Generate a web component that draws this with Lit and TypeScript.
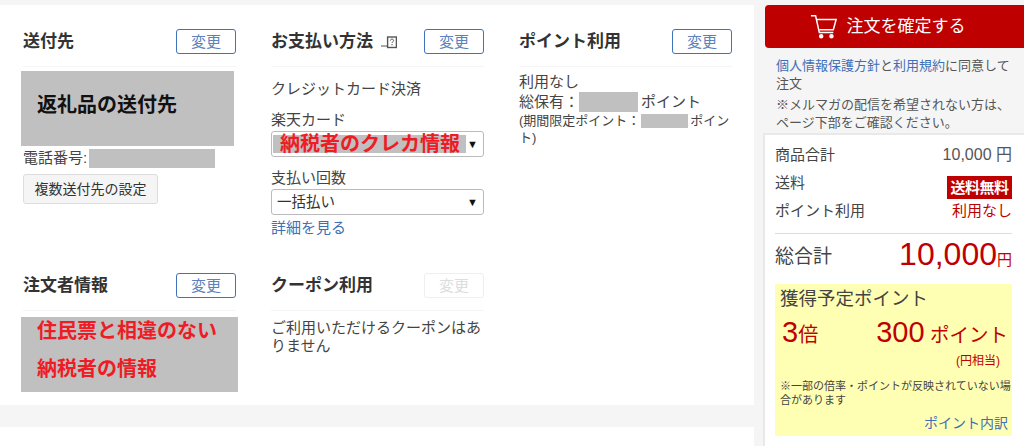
import { LitElement, html, css } from "lit";
import { customElement } from "lit/decorators.js";

@customElement("app-root")
export class AppRoot extends LitElement {
  static styles = css`
    :host { display: block; width: 1024px; height: 446px; overflow: hidden; background: #f5f5f5; color: #444;
      font-family: "Liberation Sans", "Noto Sans CJK JP", sans-serif; font-size: 15px; line-height: 20px; }
    * { box-sizing: border-box; }
    a { color: #3f6fb5; text-decoration: none; }
    .page { display: flex; align-items: flex-start; padding-top: 5px; height: 446px; }
    .left { width: 754px; flex: none; display: flex; flex-direction: column; gap: 22px; }
    .panel { background: #fff; height: 400px; padding: 24px 21px 0 23px; display: grid; grid-template-columns: repeat(3, 213px); column-gap: 35px; grid-template-rows: 244px auto; }
    .blank { background: #fff; height: 40px; }
    .head { display: flex; justify-content: space-between; align-items: flex-start; height: 38px; border-bottom: 1px solid #f5f5f5; }
    .title { font-size: 17px; font-weight: 700; color: #333; line-height: 24px; margin-top: 1px; display: flex; align-items: center; gap: 8px; }
    .chg { width: 60px; height: 25px; border: 1px solid #3f73b8; border-radius: 3px; color: #5a82bd; background: #fff; font-size: 15px; display: flex; align-items: center; justify-content: center; }
    .chg.off { border-color: #eee; color: #ddd; }
    .mask { background: #c0c0c0; }
    .addr { margin: 4px 0 0 -2px; width: 213px; height: 75px; padding: 22px 16px 0; font-size: 20px; font-weight: 700; color: #111; line-height: 24px; }
    .tel { display: flex; align-items: center; height: 20px; margin-top: 2px; }
    .tel .mask { width: 126px; height: 19px; margin-left: 2px; }
    .multi { margin-top: 6px; width: 135px; height: 30px; border: 1px solid #ddd; border-radius: 3px; background: #f5f5f5; color: #333; font-size: 14px; display: flex; align-items: center; justify-content: center; }
    .pay1 { margin-top: 12px; }
    .lbl { margin-top: 11px; line-height: 20px; }
    .sel { height: 26px; border: 1px solid #bbb; border-radius: 3px; background: #fff; display: flex; align-items: center; justify-content: space-between; padding: 0 5px; color: #333; margin-top: 1px; font-size: 14.5px; }
    .sel.c { padding-left: 1px; }
    .sel .mask { width: 193px; height: 18px; color: #ee1c25; font-size: 20px; font-weight: 700; padding-left: 7px; line-height: 18px; white-space: nowrap; }
    .arrow { font-size: 11px; color: #111; line-height: 1; }
    .g2 { margin-top: 11px; }
    .sel + a { display: block; margin-top: 3px; }
    .pts { margin-top: 5px; }
    .pts div { white-space: nowrap; display: flex; align-items: center; height: 20px; }
    .pts .m1 { width: 59px; height: 20px; margin-right: 3px; }
    .pts .m2 { width: 47px; height: 14px; margin: 0 2px 0 1px; }
    .pts .sm { font-size: 13px; height: 17px; }
    .who { display: flow-root; margin: 6px 0 0 -2px; width: 217px; height: 75px; padding: 0 16px; color: #ee1c25; font-size: 20px; font-weight: 700; line-height: 38px; }
    .who div { margin-top: -5px; }
    .cp { margin-top: 8px; line-height: 18px; }
    .right { width: 259px; margin-left: 11px; flex: none; }
    .buy { height: 43px; background: #bf0000; border-radius: 4px 0 0 4px; color: #fff; font-size: 17px; display: flex; align-items: center; justify-content: center; gap: 9px; padding-right: 14px; }
    .note { padding: 9px 10px 0 11px; font-size: 13px; line-height: 18px; color: #555; height: 85px; }
    .note p { margin: 0 0 3px; }
    .box { width: 262px; height: 320px; margin-left: -2px; background: #fff; border: 2px solid #e9e9e9; border-right: 0; padding: 6px 0 0 10px; }
    .row { display: flex; justify-content: space-between; align-items: center; width: 237px; height: 28px; color: #444; font-size: 15px; }
    .row .v { color: #555; font-size: 16px; }
    .free { background: #bf0000; color: #fff; font-weight: 700; font-size: 15px; height: 23px; width: 65px; line-height: 23px; text-align: center; white-space: nowrap; margin-top: 8px; letter-spacing: -0.5px; }
    .red { color: #bf0000; }
    .total { width: 237px; margin-top: 8px; border-top: 1px solid #ddd; height: 51px; padding-bottom: 4px; display: flex; justify-content: space-between; align-items: center; font-size: 19px; }
    .total .red { font-size: 32px; line-height: 40px; }
    .total small { font-size: 15px; }
    .yel { width: 237px; height: 152px; background: #ffffb3; padding: 3px 0 0 5px; }
    .yel .t { font-size: 18.5px; line-height: 24px; white-space: nowrap; }
    .big { display: flex; justify-content: space-between; align-items: baseline; color: #bf0000; font-size: 19.5px; line-height: 36px; margin-top: 3px; padding: 0 4px 0 2px; white-space: nowrap; }
    .big b { font-weight: 400; font-size: 29px; }
    .bai { font-size: 20px; }
    .en { text-align: right; color: #bf0000; font-size: 12px; line-height: 16px; padding-right: 12px; }
    .fine { font-size: 11px; line-height: 14px; margin-top: 10px; color: #444; }
    .more { text-align: right; font-size: 14px; margin-top: 6px; padding-right: 4px; }
  `;
  render() {
    const head = (t: unknown, off = false) => html`<div class="head"><div class="title">${t}</div><div class="chg ${off ? "off" : ""}">変更</div></div>`;
    return html`<div class="page">
      <div class="left">
        <div class="panel">
          <section>
            ${head("送付先")}
            <div class="mask addr">返礼品の送付先</div>
            <div class="tel">電話番号:<span class="mask"></span></div>
            <div class="multi">複数送付先の設定</div>
          </section>
          <section>
            ${head(html`お支払い方法
              <svg width="16" height="13" viewBox="0 0 16 13"><path d="M0 10h6" stroke="#555" fill="none"/><rect x="6.6" y="1" width="8.8" height="10.5" fill="none" stroke="#555" stroke-width="1.4"/><path d="M9.4 4.6c0-2 3.2-2 3.2 0 0 1.2-1.6 1.2-1.6 2.4M11 8v1.3" stroke="#555" fill="none"/></svg>`)}
            <div class="pay1">クレジットカード決済</div>
            <div class="lbl">楽天カード</div>
            <div class="sel c"><span class="mask">納税者のクレカ情報</span><span class="arrow">▼</span></div>
            <div class="lbl g2">支払い回数</div>
            <div class="sel"><span>一括払い</span><span class="arrow">▼</span></div>
            <a href="#">詳細を見る</a>
          </section>
          <section>
            ${head("ポイント利用")}
            <div class="pts">
              <div>利用なし</div>
              <div>総保有：<span class="mask m1"></span>ポイント</div>
              <div class="sm">(期間限定ポイント：<span class="mask m2"></span>ポイン</div>
              <div class="sm">ト)</div>
            </div>
          </section>
          <section>
            ${head("注文者情報")}
            <div class="mask who"><div>住民票と相違のない<br />納税者の情報</div></div>
          </section>
          <section>
            ${head("クーポン利用", true)}
            <div class="cp">ご利用いただけるクーポンはありません</div>
          </section>
        </div>
        <div class="blank"></div>
      </div>
      <div class="right">
        <div class="buy">
          <svg width="28" height="28" viewBox="0 0 30 30" fill="none" stroke="#fff" stroke-width="1.6"><path d="M1 3h5l4 18h15"/><path d="M7 7h21l-3 11H10"/><circle cx="12" cy="25" r="1.6" fill="#fff"/><circle cx="23" cy="25" r="1.6" fill="#fff"/></svg>
          <span>注文を確定する</span>
        </div>
        <div class="note">
          <p><a href="#">個人情報保護方針</a>と<a href="#">利用規約</a>に同意して注文</p>
          <p>※メルマガの配信を希望されない方は、ページ下部をご確認ください。</p>
        </div>
        <div class="box">
          <div class="row"><span>商品合計</span><span class="v">10,000 円</span></div>
          <div class="row"><span>送料</span><span class="free">送料無料</span></div>
          <div class="row"><span>ポイント利用</span><span class="red">利用なし</span></div>
          <div class="total"><span>総合計</span><span class="red">10,000<small>円</small></span></div>
          <div class="yel">
            <div class="t">獲得予定ポイント</div>
            <div class="big"><span><b>3</b><span class="bai">倍</span></span><span><b>300</b> ポイント</span></div>
            <div class="en">(円相当)</div>
            <div class="fine">※一部の倍率・ポイントが反映されていない場合があります</div>
            <div class="more"><a href="#">ポイント内訳</a></div>
          </div>
        </div>
      </div>
    </div>`;
  }
}
